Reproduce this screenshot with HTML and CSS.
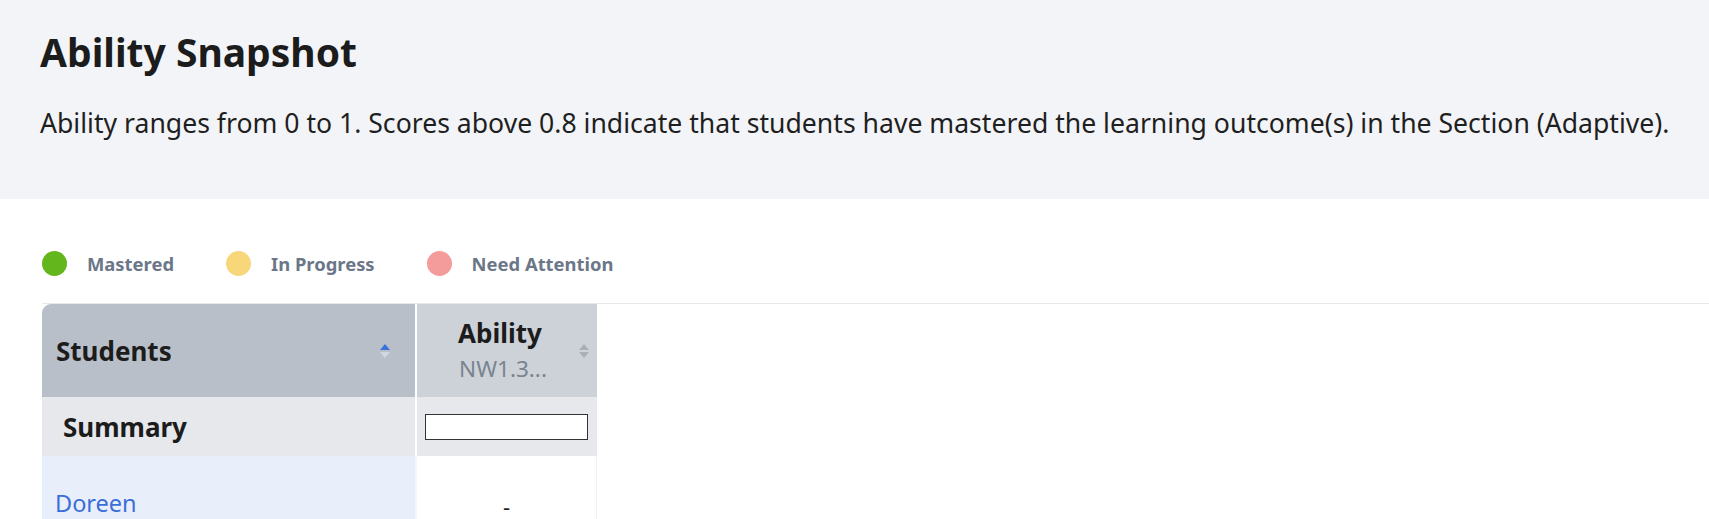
FILE: index.html
```html
<!DOCTYPE html>
<html lang="en">
<head>
<meta charset="utf-8">
<title>Ability Snapshot</title>
<link rel="stylesheet" href="styles.css">
</head>
<body>
<header class="intro">
  <h1 class="title">Ability Snapshot</h1>
  <p class="desc">Ability ranges from 0 to 1. Scores above 0.8 indicate that students have mastered the learning outcome(s) in the Section (Adaptive).</p>
</header>
<main class="content">
  <div class="legend">
    <div class="legend-item"><span class="dot dot-green"></span><span class="legend-label">Mastered</span></div>
    <div class="legend-item"><span class="dot dot-yellow"></span><span class="legend-label">In Progress</span></div>
    <div class="legend-item"><span class="dot dot-red"></span><span class="legend-label">Need Attention</span></div>
  </div>
  <table class="grid">
    <thead>
      <tr>
        <th class="th-students">
          <div class="th-inner">
            <span>Students</span>
            <span class="sort"><span class="up active"></span><span class="down"></span></span>
          </div>
        </th>
        <th class="th-ability">
          <div class="th-inner th-inner-center">
            <span class="th-stack"><span class="th-main">Ability</span><span class="th-sub">NW1.3...</span></span>
            <span class="sort sort-right"><span class="up"></span><span class="down"></span></span>
          </div>
        </th>
      </tr>
    </thead>
    <tbody>
      <tr class="summary">
        <td class="td-summary">Summary</td>
        <td class="td-summary-val"><div class="summary-box"></div></td>
      </tr>
      <tr class="student">
        <td class="td-name"><a class="name" href="#">Doreen</a></td>
        <td class="td-val">-</td>
      </tr>
    </tbody>
  </table>
</main>
</body>
</html>
```
FILE: styles.css
```css
* { box-sizing: border-box; }
html, body { margin: 0; padding: 0; }
body {
  font-family: "Noto Sans", "Open Sans", sans-serif;
  background: #ffffff;
  color: #1f1f1f;
  width: 1709px;
  overflow: hidden;
}
.intro {
  background: #f3f4f8;
  height: 199px;
  padding: 27px 40px 0 40px;
}
.title {
  margin: 0;
  font-size: 39px;
  font-weight: 700;
  line-height: 50px;
  color: #1c1c1c;
}
.desc {
  margin: 28px 0 0 0;
  font-size: 26.6px;
  line-height: 36px;
  color: #1f1f1f;
  white-space: nowrap;
}
.content {
  padding-left: 42px;
}
.legend {
  display: flex;
  align-items: center;
  height: 105px;
  padding-top: 25px;
  border-bottom: 1px solid #e6e8eb;
}
.legend-item {
  display: flex;
  align-items: center;
  margin-right: 52px;
}
.dot {
  width: 25px;
  height: 25px;
  border-radius: 50%;
  margin-right: 20px;
}
.dot-green { background: #63b61b; }
.dot-yellow { background: #f8d67a; }
.dot-red { background: #f49b9b; }
.legend-label {
  font-size: 18.4px;
  font-weight: 700;
  color: #6b7789;
}
.grid {
  border-collapse: separate;
  border-spacing: 0;
}
.grid th, .grid td { padding: 0; }
.th-students {
  width: 375px;
  height: 93px;
  background: #b8bfc8;
  border-top-left-radius: 9px;
  border-right: 2px solid #fff;
  text-align: left;
}
.th-ability {
  width: 180px;
  background: #cdd2d9;
}
.th-inner {
  display: flex;
  align-items: center;
  justify-content: space-between;
  padding: 0 25px 0 14px;
  font-size: 26px;
  font-weight: 700;
  color: #1c1c1c;
}
.th-inner-center {
  justify-content: center;
  padding: 0 14px 0 0;
  position: relative;
}
.th-stack {
  display: flex;
  flex-direction: column;
  align-items: center;
}
.th-main { font-size: 26px; font-weight: 700; line-height: 36px; }
.th-sub { font-size: 22.5px; font-weight: 400; color: #7a848f; line-height: 36px; margin-left: 6px; }
.sort {
  display: flex;
  flex-direction: column;
  gap: 2px;
}
.sort-right {
  position: absolute;
  right: 8px;
  top: 50%;
  transform: translateY(-50%);
}
.sort .up, .sort .down {
  width: 0;
  height: 0;
  border-left: 5px solid transparent;
  border-right: 5px solid transparent;
}
.sort .up { border-bottom: 6px solid #a9afb7; }
.sort .down { border-top: 6px solid #a9afb7; }
.sort .up.active { border-bottom-color: #3a72e0; }
.th-students .sort .down { border-top-color: #d3d7dd; }
.summary td {
  height: 59px;
  background: #e7e8ec;
}
.td-summary {
  border-right: 2px solid #fff;
  padding-left: 21px !important;
  font-size: 26px;
  font-weight: 700;
  color: #1c1c1c;
}
.td-summary-val { padding: 0 9px 0 8px !important; }
.summary-box {
  height: 26px;
  border: 1px solid #333;
  background: #fff;
}
.student td { height: 70px; vertical-align: bottom; }
.td-name {
  background: #e9eefb;
  padding: 0 0 0 13px !important;
  border-right: 2px solid #f4f6fb;
}
.name {
  color: #3a6fd8;
  text-decoration: none;
  font-size: 23.5px;
  line-height: 46px;
}
.td-val {
  text-align: center;
  font-size: 22px;
  line-height: 40px;
  border-right: 1px solid #f0f1f4;
}
```
